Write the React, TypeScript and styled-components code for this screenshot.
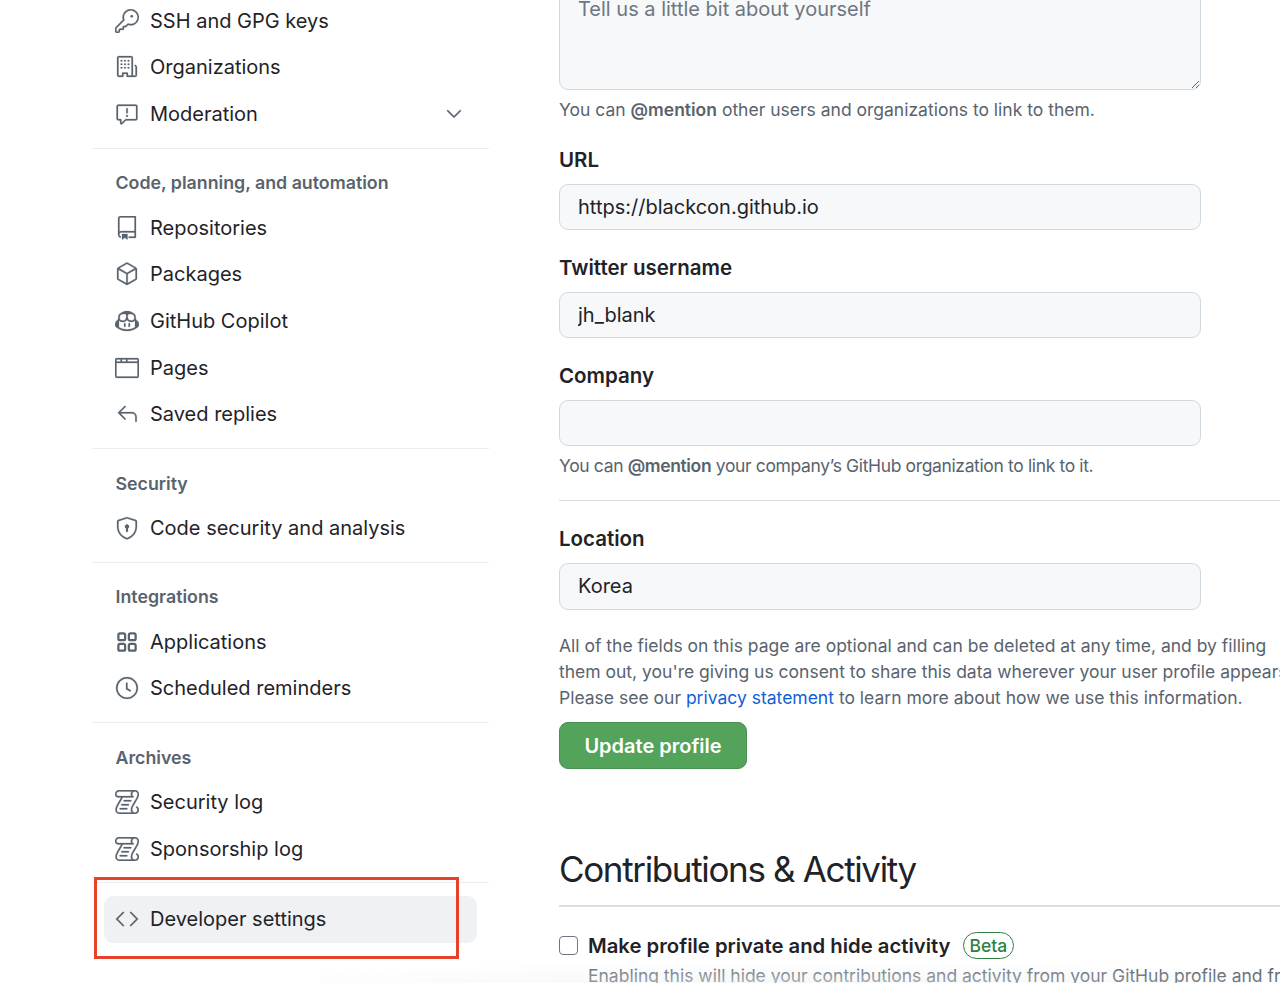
import * as React from "react";
import { createGlobalStyle, styled } from "styled-components";
import {
  GoBrowser,
  GoChevronDown,
  GoClock,
  GoCode,
  GoCopilot,
  GoKey,
  GoLog,
  GoOrganization,
  GoPackage,
  GoReply,
  GoReport,
  GoRepo,
  GoShieldLock,
} from "react-icons/go";

const GlobalStyle = createGlobalStyle`
  html, body {
    margin: 0;
    padding: 0;
    background: #fff;
  }
  * {
    box-sizing: border-box;
  }
`;

const Page = styled.div`
  position: relative;
  display: flex;
  width: 1280px;
  height: 983px;
  overflow: hidden;
  color: #1f2328;
  font-family: Inter, "Liberation Sans", sans-serif;
`;

const Sidebar = styled.nav`
  flex: 0 0 397px;
  margin-left: 92px;
  margin-top: -2.6px;
`;

const Section = styled.div`
  padding-bottom: 10.5px;
  border-bottom: 1.5px solid #ebedf0;
`;

const SectionTitle = styled.h3`
  margin: 0;
  padding: 19.5px 0 6px 23.5px;
  font-size: 17.8px;
  line-height: 30px;
  font-weight: 600;
  color: #59636e;
`;

const NavRow = styled.div<{ $active?: boolean }>`
  display: flex;
  align-items: center;
  height: 46.67px;
  margin: 0 12px;
  padding: 0 11px;
  border-radius: 9px;
  font-size: 20px;
  background: ${(p) => (p.$active ? "#f0f1f3" : "transparent")};

  svg {
    flex: none;
    width: 24px;
    height: 24px;
    color: #59636e;
    stroke: currentColor;
    stroke-width: 0.25px;
  }
`;

const NavLabel = styled.span`
  flex: 1;
  margin-left: 11px;
`;

const DevSettings = styled.div`
  padding-top: 12.5px;
`;

const Main = styled.main`
  flex: 0 0 900px;
  margin-left: 70px;
  margin-top: -19.5px;
`;

const FieldLabel = styled.label<{ $top?: number }>`
  display: block;
  margin-top: ${(p) => p.$top ?? 22.5}px;
  margin-bottom: 9px;
  font-size: 20.5px;
  line-height: 30px;
  font-weight: 600;
`;

const TextField = styled.input`
  display: block;
  width: 642px;
  height: 46.5px;
  padding: 0 18px;
  border: 1.5px solid #d1d9e0;
  border-radius: 9px;
  background: #f6f8fa;
  color: #1f2328;
  font-family: inherit;
  font-size: 20px;
  outline: none;
`;

const BioArea = styled.textarea`
  display: block;
  width: 642px;
  height: 109px;
  padding: 12px 18px;
  border: 1.5px solid #d1d9e0;
  border-radius: 9px;
  background: #f6f8fa;
  font-family: inherit;
  font-size: 20px;
  line-height: 31px;
  outline: none;
  resize: vertical;

  &::placeholder {
    color: #6e7781;
    opacity: 1;
  }
`;

const Help = styled.p<{ $tight?: boolean }>`
  margin: 7px 0 0;
  font-size: 17.5px;
  line-height: 26px;
  color: #59636e;
  letter-spacing: ${(p) => (p.$tight ? "-0.36px" : "normal")};

  strong {
    font-weight: 600;
  }
`;

const Rule = styled.hr<{ $top: number }>`
  height: 1.5px;
  margin: ${(p) => p.$top}px 0 0;
  border: 0;
  background: #d8dee4;
`;

const Notice = styled.p`
  margin: 23.5px 0 0;
  font-size: 17.5px;
  line-height: 26px;
  color: #59636e;
  white-space: nowrap;

  a {
    color: #0f5fd6;
    text-decoration: none;
  }
`;

const UpdateButton = styled.button`
  display: block;
  width: 188px;
  height: 47px;
  margin-top: 11px;
  border: 1.5px solid #459050;
  border-radius: 9px;
  background: #54a35a;
  color: #fff;
  font-family: inherit;
  font-size: 20px;
  font-weight: 600;
`;

const Heading = styled.h2`
  margin: 75px 0 0;
  padding-bottom: 11px;
  font-size: 35px;
  line-height: 50px;
  font-weight: 400;
  letter-spacing: -1.35px;
`;

const CheckRow = styled.div`
  display: flex;
  align-items: center;
  height: 30px;
  margin-top: 24px;
`;

const Check = styled.input`
  width: 19px;
  height: 19px;
  margin: 0 10px 0 0;
  appearance: none;
  border: 1.5px solid #6e7781;
  border-radius: 4px;
  background: #fff;
`;

const CheckLabel = styled.span`
  font-size: 20.3px;
  font-weight: 600;
`;

const BetaBadge = styled.span`
  display: flex;
  align-items: center;
  height: 27px;
  margin-left: 12px;
  padding: 0 6px;
  border: 1.5px solid #2c8141;
  border-radius: 14px;
  color: #2c8141;
  font-size: 17.5px;
  font-weight: 500;
`;

const CheckNote = styled.p`
  margin: 2px 0 0 29px;
  font-size: 17.5px;
  line-height: 26px;
  color: #59636e;
  white-space: nowrap;
`;

const Callout = styled.div`
  position: absolute;
  left: 94px;
  top: 877px;
  width: 365px;
  height: 82px;
  border: 3px solid #e8412a;
`;

const BottomShade = styled.div`
  position: absolute;
  left: 320px;
  right: 0;
  bottom: 0;
  height: 22px;
  background: radial-gradient(ellipse 620px 22px at 50% 100%, rgba(238, 240, 242, 0.55), rgba(238, 240, 242, 0));
  pointer-events: none;
`;

const AppsIcon = () => (
  <svg viewBox="0 0 16 16" fill="currentColor">
    <path
      stroke="none"
      d="M1.5 3.25c0-.966.784-1.75 1.75-1.75h2.5c.966 0 1.75.784 1.75 1.75v2.5A1.75 1.75 0 0 1 5.75 7.5h-2.5A1.75 1.75 0 0 1 1.5 5.75Zm7 0c0-.966.784-1.75 1.75-1.75h2.5c.966 0 1.75.784 1.75 1.75v2.5a1.75 1.75 0 0 1-1.75 1.75h-2.5A1.75 1.75 0 0 1 8.5 5.75Zm-7 7c0-.966.784-1.75 1.75-1.75h2.5c.966 0 1.75.784 1.75 1.75v2.5a1.75 1.75 0 0 1-1.75 1.75h-2.5a1.75 1.75 0 0 1-1.75-1.75Zm7 0c0-.966.784-1.75 1.75-1.75h2.5c.966 0 1.75.784 1.75 1.75v2.5a1.75 1.75 0 0 1-1.75 1.75h-2.5a1.75 1.75 0 0 1-1.75-1.75ZM3.25 3a.25.25 0 0 0-.25.25v2.5c0 .138.112.25.25.25h2.5A.25.25 0 0 0 6 5.75v-2.5A.25.25 0 0 0 5.75 3Zm7 0a.25.25 0 0 0-.25.25v2.5c0 .138.112.25.25.25h2.5a.25.25 0 0 0 .25-.25v-2.5a.25.25 0 0 0-.25-.25Zm-7 7a.25.25 0 0 0-.25.25v2.5c0 .138.112.25.25.25h2.5a.25.25 0 0 0 .25-.25v-2.5a.25.25 0 0 0-.25-.25Zm7 0a.25.25 0 0 0-.25.25v2.5c0 .138.112.25.25.25h2.5a.25.25 0 0 0 .25-.25v-2.5a.25.25 0 0 0-.25-.25Z"
    />
  </svg>
);

type Item = { icon: React.ReactNode; label: string; chevron?: boolean };

const navGroups: { title?: string; items: Item[] }[] = [
  {
    items: [
      { icon: <GoKey />, label: "SSH and GPG keys" },
      { icon: <GoOrganization />, label: "Organizations" },
      { icon: <GoReport />, label: "Moderation", chevron: true },
    ],
  },
  {
    title: "Code, planning, and automation",
    items: [
      { icon: <GoRepo />, label: "Repositories" },
      { icon: <GoPackage />, label: "Packages" },
      { icon: <GoCopilot />, label: "GitHub Copilot" },
      { icon: <GoBrowser />, label: "Pages" },
      { icon: <GoReply />, label: "Saved replies" },
    ],
  },
  {
    title: "Security",
    items: [{ icon: <GoShieldLock />, label: "Code security and analysis" }],
  },
  {
    title: "Integrations",
    items: [
      { icon: <AppsIcon />, label: "Applications" },
      { icon: <GoClock />, label: "Scheduled reminders" },
    ],
  },
  {
    title: "Archives",
    items: [
      { icon: <GoLog />, label: "Security log" },
      { icon: <GoLog />, label: "Sponsorship log" },
    ],
  },
];

export default function App() {
  return (
    <Page>
      <GlobalStyle />
      <Sidebar>
        {navGroups.map((group) => (
          <Section key={group.items[0].label}>
            {group.title && <SectionTitle>{group.title}</SectionTitle>}
            {group.items.map((item) => (
              <NavRow key={item.label}>
                {item.icon}
                <NavLabel>{item.label}</NavLabel>
                {item.chevron && <GoChevronDown />}
              </NavRow>
            ))}
          </Section>
        ))}
        <DevSettings>
          <NavRow $active>
            <GoCode />
            <NavLabel>Developer settings</NavLabel>
          </NavRow>
        </DevSettings>
      </Sidebar>

      <Main>
        <BioArea placeholder="Tell us a little bit about yourself" readOnly />
        <Help>
          You can <strong>@mention</strong> other users and organizations to link to them.
        </Help>

        <FieldLabel $top={22}>URL</FieldLabel>
        <TextField defaultValue="https://blackcon.github.io" />

        <FieldLabel>Twitter username</FieldLabel>
        <TextField defaultValue="jh_blank" />

        <FieldLabel>Company</FieldLabel>
        <TextField />
        <Help $tight>
          You can <strong>@mention</strong> your company’s GitHub organization to link to it.
        </Help>

        <Rule $top={20.5} />

        <FieldLabel $top={23}>Location</FieldLabel>
        <TextField defaultValue="Korea" />

        <Notice>
          All of the fields on this page are optional and can be deleted at any time, and by filling
          <br />
          them out, you're giving us consent to share this data wherever your user profile appears
          <br />
          Please see our <a href="#privacy">privacy statement</a> to learn more about how we use this
          information.
        </Notice>
        <UpdateButton>Update profile</UpdateButton>

        <Heading>Contributions &amp; Activity</Heading>
        <Rule $top={0} />

        <CheckRow>
          <Check type="checkbox" />
          <CheckLabel>Make profile private and hide activity</CheckLabel>
          <BetaBadge>Beta</BetaBadge>
        </CheckRow>
        <CheckNote>Enabling this will hide your contributions and activity from your GitHub profile and fr</CheckNote>
      </Main>

      <Callout />
      <BottomShade />
    </Page>
  );
}
